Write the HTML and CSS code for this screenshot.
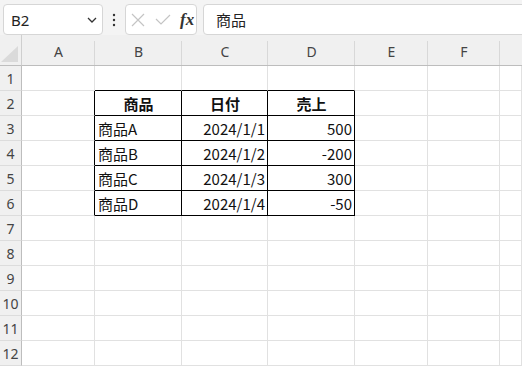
FILE: index.html
```html
<!DOCTYPE html>
<html>
	<head>
		<meta charset="utf-8">
		<title>Sheet</title>
		<link rel="stylesheet" href="styles.css">
	</head>
	<body>
		<div class="toolbar">
			<div class="namebox">
				<span>B2</span>
				<svg width="10" height="6" viewBox="0 0 10 6"><polyline points="1,1 5,5 9,1" fill="none" stroke="#333" stroke-width="1.3"/></svg>
			</div>
			<div class="dots">
				<svg width="4" height="14" viewBox="0 0 4 14"><circle cx="2" cy="2" r="1.2" fill="#333"/><circle cx="2" cy="7" r="1.2" fill="#333"/><circle cx="2" cy="12" r="1.2" fill="#333"/></svg>
			</div>
			<div class="fxbox">
				<svg width="14" height="14" viewBox="0 0 14 14"><path d="M1 1 L13 13 M13 1 L1 13" stroke="#c4c4c4" stroke-width="1.2"/></svg>
				<svg width="16" height="12" viewBox="0 0 16 12"><polyline points="1,5 6,10 15,1" fill="none" stroke="#c4c4c4" stroke-width="1.2"/></svg>
				<span class="fx">fx</span>
			</div>
			<div class="formula">商品</div>
		</div>

		<div class="sheet">
			<div class="corner"><svg width="17" height="16" viewBox="0 0 17 16"><polygon points="17,0 17,16 0,16" fill="#dadada"/></svg></div>
			<div class="colhead">A</div>
			<div class="colhead">B</div>
			<div class="colhead">C</div>
			<div class="colhead">D</div>
			<div class="colhead">E</div>
			<div class="colhead">F</div>
			<div class="colhead last"></div>

			<div class="rowhead">1</div>
			<div class="cell"></div><div class="cell tt"></div><div class="cell tt"></div><div class="cell tt"></div><div class="cell"></div><div class="cell"></div><div class="cell"></div>

			<div class="rowhead">2</div>
			<div class="cell tl"></div><div class="cell t head">商品</div><div class="cell t head">日付</div><div class="cell t head">売上</div><div class="cell"></div><div class="cell"></div><div class="cell"></div>

			<div class="rowhead">3</div>
			<div class="cell tl"></div><div class="cell t">商品A</div><div class="cell t num">2024/1/1</div><div class="cell t num">500</div><div class="cell"></div><div class="cell"></div><div class="cell"></div>

			<div class="rowhead">4</div>
			<div class="cell tl"></div><div class="cell t">商品B</div><div class="cell t num">2024/1/2</div><div class="cell t num">-200</div><div class="cell"></div><div class="cell"></div><div class="cell"></div>

			<div class="rowhead">5</div>
			<div class="cell tl"></div><div class="cell t">商品C</div><div class="cell t num">2024/1/3</div><div class="cell t num">300</div><div class="cell"></div><div class="cell"></div><div class="cell"></div>

			<div class="rowhead">6</div>
			<div class="cell tl"></div><div class="cell t">商品D</div><div class="cell t num">2024/1/4</div><div class="cell t num">-50</div><div class="cell"></div><div class="cell"></div><div class="cell"></div>

			<div class="rowhead">7</div>
			<div class="cell"></div><div class="cell"></div><div class="cell"></div><div class="cell"></div><div class="cell"></div><div class="cell"></div><div class="cell"></div>

			<div class="rowhead">8</div>
			<div class="cell"></div><div class="cell"></div><div class="cell"></div><div class="cell"></div><div class="cell"></div><div class="cell"></div><div class="cell"></div>

			<div class="rowhead">9</div>
			<div class="cell"></div><div class="cell"></div><div class="cell"></div><div class="cell"></div><div class="cell"></div><div class="cell"></div><div class="cell"></div>

			<div class="rowhead">10</div>
			<div class="cell"></div><div class="cell"></div><div class="cell"></div><div class="cell"></div><div class="cell"></div><div class="cell"></div><div class="cell"></div>

			<div class="rowhead">11</div>
			<div class="cell"></div><div class="cell"></div><div class="cell"></div><div class="cell"></div><div class="cell"></div><div class="cell"></div><div class="cell"></div>

			<div class="rowhead">12</div>
			<div class="cell"></div><div class="cell"></div><div class="cell"></div><div class="cell"></div><div class="cell"></div><div class="cell"></div><div class="cell"></div>
		</div>
	</body>
</html>
```

FILE: styles.css
```css
body{
	margin: 0;
	padding: 0;
	background: #ffffff;
	font-family: "Noto Sans CJK JP", "Noto Sans", sans-serif;
	overflow: hidden;
}
.toolbar{
	display: flex;
	align-items: stretch;
	height: 35px;
	box-sizing: border-box;
	padding: 4px 0 0 3px;
	background: #f4f4f4;
}
.namebox{
	width: 100px;
	box-sizing: border-box;
	display: flex;
	align-items: center;
	justify-content: space-between;
	padding: 0 5px 0 7px;
	background: #ffffff;
	border: 1px solid #d6d6d6;
	border-radius: 4px;
	font-family: "Noto Sans", "Liberation Sans", sans-serif;
	font-size: 15px;
	color: #222222;
}
.dots{
	width: 22px;
	display: flex;
	align-items: center;
	justify-content: center;
}
.fxbox{
	width: 72px;
	box-sizing: border-box;
	display: flex;
	align-items: center;
	gap: 10px;
	padding-left: 5px;
	background: #ffffff;
	border: 1px solid #d6d6d6;
	border-radius: 4px;
}
.fx{
	font-family: "Liberation Serif", serif;
	font-style: italic;
	font-weight: bold;
	font-size: 17px;
	color: #333333;
	margin-left: -1px;
}
.formula{
	flex: 1;
	margin-left: 6px;
	margin-right: -10px;
	display: flex;
	align-items: center;
	padding-left: 12px;
	background: #ffffff;
	border: 1px solid #d6d6d6;
	border-radius: 4px;
	font-size: 15px;
	color: #222222;
}
.sheet{
	display: grid;
	grid-template-columns: 22px 73px 87px 86px 87px 73px 72px 1fr;
	grid-template-rows: 31px repeat(12, 25px);
}
.corner{
	background: #f0f0f0;
	border-right: 1px solid #cfcfcf;
	border-bottom: 1px solid #bdbdbd;
	box-sizing: border-box;
	display: flex;
	align-items: flex-end;
	justify-content: flex-end;
	padding: 0 3px 3px 0;
}
.colhead{
	background: linear-gradient(#d8d8d8, #d8d8d8) right 6px / 1px calc(100% - 6px) no-repeat, #f0f0f0;
	border-bottom: 1px solid #bdbdbd;
	box-sizing: border-box;
	display: flex;
	align-items: center;
	justify-content: center;
	padding-top: 2px;
	font-family: "Noto Sans", "Liberation Sans", sans-serif;
	font-size: 14px;
	color: #444444;
}
.colhead.last{
	background: #f0f0f0;
}
.rowhead{
	background: #f0f0f0;
	border-right: 1px solid #bdbdbd;
	border-bottom: 1px solid #dcdcdc;
	box-sizing: border-box;
	display: flex;
	align-items: center;
	justify-content: center;
	font-family: "Noto Sans", "Liberation Sans", sans-serif;
	font-size: 14px;
	color: #444444;
}
.cell{
	border-right: 1px solid #e1e1e1;
	border-bottom: 1px solid #e1e1e1;
	box-sizing: border-box;
	display: flex;
	align-items: center;
	padding: 0 2px 0 3px;
	font-size: 15px;
	color: #111111;
	white-space: nowrap;
}
.cell.t{
	border-right-color: #000000;
	border-bottom-color: #000000;
}
.cell.tl{
	border-right-color: #000000;
}
.cell.tt{
	border-bottom-color: #000000;
}
.cell.head{
	justify-content: center;
	font-weight: bold;
}
.cell.num{
	justify-content: flex-end;
}
```
